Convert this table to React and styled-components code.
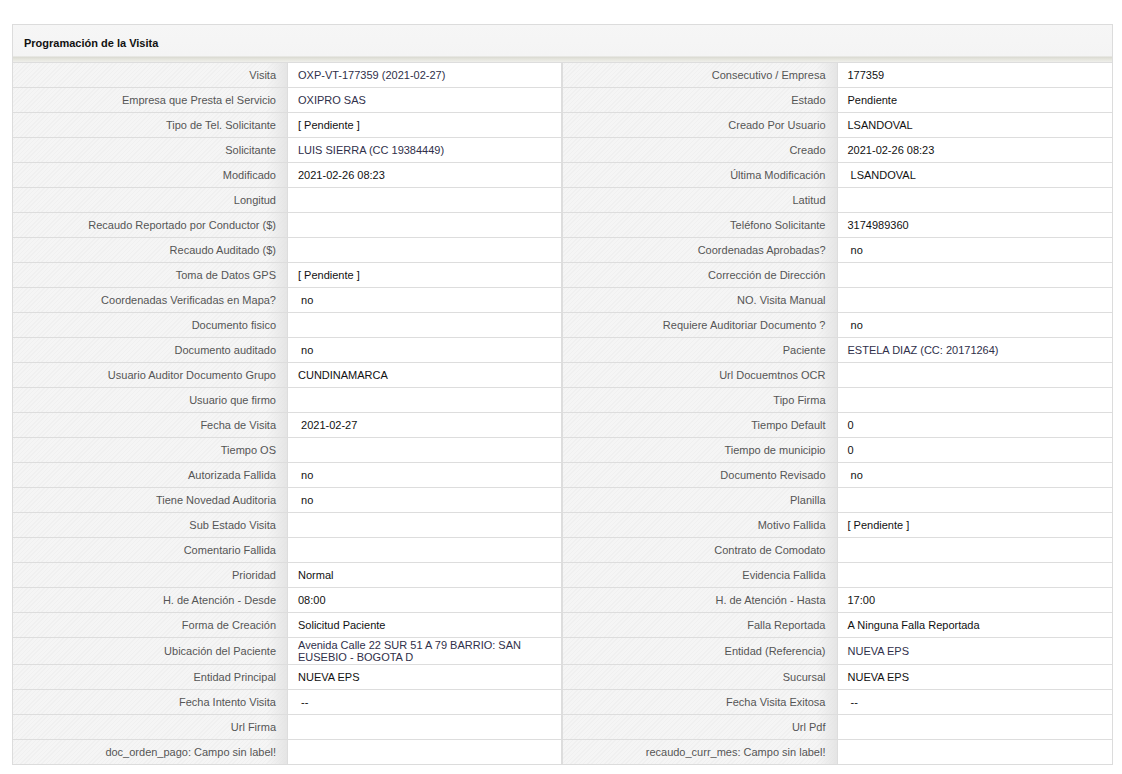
import React from 'react';
import styled, { createGlobalStyle } from 'styled-components';

const GlobalStyle = createGlobalStyle`
  body {
    margin: 0;
    background: #fff;
    font-family: 'Liberation Sans', Arial, sans-serif;
  }
`;

const rows = [
  [['Visita', 'OXP-VT-177359 (2021-02-27)', true], ['Consecutivo / Empresa', '177359']],
  [['Empresa que Presta el Servicio', 'OXIPRO SAS', true], ['Estado', 'Pendiente']],
  [['Tipo de Tel. Solicitante', '[ Pendiente ]'], ['Creado Por Usuario', 'LSANDOVAL']],
  [['Solicitante', 'LUIS SIERRA (CC 19384449)', true], ['Creado', '2021-02-26 08:23']],
  [['Modificado', '2021-02-26 08:23'], ['Última Modificación', '\u00a0LSANDOVAL']],
  [['Longitud', ''], ['Latitud', '']],
  [['Recaudo Reportado por Conductor ($)', ''], ['Teléfono Solicitante', '3174989360']],
  [['Recaudo Auditado ($)', ''], ['Coordenadas Aprobadas?', '\u00a0no']],
  [['Toma de Datos GPS', '[ Pendiente ]'], ['Corrección de Dirección', '']],
  [['Coordenadas Verificadas en Mapa?', '\u00a0no'], ['NO. Visita Manual', '']],
  [['Documento fisico', ''], ['Requiere Auditoriar Documento ?', '\u00a0no']],
  [['Documento auditado', '\u00a0no'], ['Paciente', 'ESTELA DIAZ (CC: 20171264)', true]],
  [['Usuario Auditor Documento Grupo', 'CUNDINAMARCA'], ['Url Docuemtnos OCR', '']],
  [['Usuario que firmo', ''], ['Tipo Firma', '']],
  [['Fecha de Visita', '\u00a02021-02-27'], ['Tiempo Default', '0']],
  [['Tiempo OS', ''], ['Tiempo de municipio', '0']],
  [['Autorizada Fallida', '\u00a0no'], ['Documento Revisado', '\u00a0no']],
  [['Tiene Novedad Auditoria', '\u00a0no'], ['Planilla', '']],
  [['Sub Estado Visita', ''], ['Motivo Fallida', '[ Pendiente ]']],
  [['Comentario Fallida', ''], ['Contrato de Comodato', '']],
  [['Prioridad', 'Normal'], ['Evidencia Fallida', '']],
  [['H. de Atención - Desde', '08:00'], ['H. de Atención - Hasta', '17:00']],
  [['Forma de Creación', 'Solicitud Paciente'], ['Falla Reportada', 'A Ninguna Falla Reportada']],
  [
    ['Ubicación del Paciente', ['Avenida Calle 22 SUR 51 A 79 BARRIO: SAN', 'EUSEBIO - BOGOTA D'], true],
    ['Entidad (Referencia)', 'NUEVA EPS', true],
  ],
  [['Entidad Principal', 'NUEVA EPS'], ['Sucursal', 'NUEVA EPS']],
  [['Fecha Intento Visita', '\u00a0--'], ['Fecha Visita Exitosa', '\u00a0--']],
  [['Url Firma', ''], ['Url Pdf', '']],
  [['doc_orden_pago: Campo sin label!', ''], ['recaudo_curr_mes: Campo sin label!', '']],
];

const renderValue = (value) =>
  Array.isArray(value)
    ? value.map((line, i) => (
        <React.Fragment key={i}>
          {i > 0 && <br />}
          {line}
        </React.Fragment>
      ))
    : value;

const App = () => {
  return (
    <>
      <GlobalStyle />
      <Page>
        <Panel>
          <Header>
            <Title>Programación de la Visita</Title>
          </Header>
          <Table>
            {rows.map((row, i) => (
              <Row key={i}>
                {row.map(([label, value, linked], j) => (
                  <Half key={j} wide={j === 1}>
                    <Label>{label}</Label>
                    <Value linked={linked}>{renderValue(value)}</Value>
                  </Half>
                ))}
              </Row>
            ))}
          </Table>
        </Panel>
      </Page>
    </>
  );
};

export default App;

const Page = styled.div`
  padding: 24px 9px 20px 12px;
`;

const Panel = styled.div`
  border: 1px solid #dcdcdc;
  background: #ddd;
`;

const Header = styled.div`
  height: 37px;
  display: flex;
  align-items: flex-start;
  padding: 0 11px;
  background: linear-gradient(
    to bottom,
    #f6f6f6 0,
    #f4f4f4 31px,
    #d9d9d1 32px,
    #e4e4dc 34px,
    #efefeb 37px
  );
`;

const Title = styled.h1`
  margin: 12px 0 0;
  font-size: 11px;
  font-weight: bold;
  color: #111;
`;

const Table = styled.div`
  display: flex;
  flex-direction: column;
  gap: 1px;
  padding-top: 1px;
`;

const Row = styled.div`
  display: flex;
  gap: 2px;
`;

const Half = styled.div`
  display: grid;
  grid-template-columns: 274px 1fr;
  gap: 1px;
  width: ${(p) => (p.wide ? '550px' : '548px')};
`;

const Label = styled.div`
  min-height: 24px;
  display: flex;
  align-items: center;
  justify-content: flex-end;
  padding: 0 11px 0 10px;
  font-size: 11px;
  color: #555;
  white-space: nowrap;
  background:
    linear-gradient(to right, rgba(228, 228, 228, 0) 0, rgba(228, 228, 228, 0) 254px, rgba(226, 226, 226, 0.85) 274px),
    repeating-linear-gradient(
      -45deg,
      #f5f5f5 0,
      #f5f5f5 2px,
      #f0f0f0 2px,
      #f0f0f0 3px
    );
`;

const Value = styled.div`
  min-height: 24px;
  display: flex;
  align-items: center;
  padding: 1px 10px;
  box-sizing: border-box;
  font-size: 11px;
  line-height: 12px;
  background: #fff;
  color: ${(p) => (p.linked ? '#30304a' : '#111')};
`;
